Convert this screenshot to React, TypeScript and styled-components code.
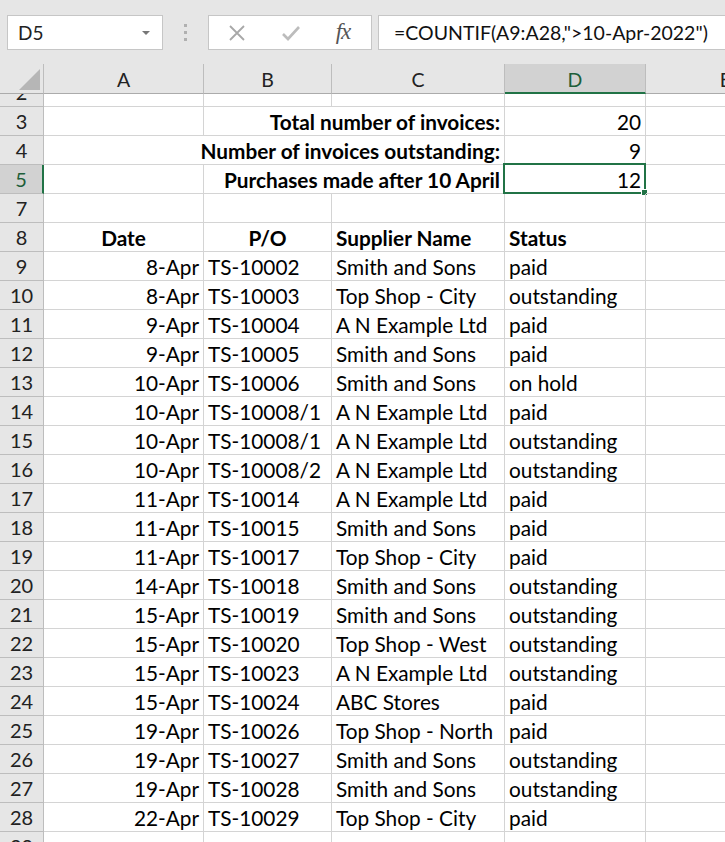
import React from "react";
import styled, { createGlobalStyle, css } from "styled-components";

const GREEN = "#217346";
const GRID = "#d4d4d4";
const HEAD_BG = "#e6e6e6";
const HEAD_SEL = "#d2d2d2";
const HEAD_LINE = "#bdbdbd";

const Global = createGlobalStyle`
  html, body { margin: 0; padding: 0; background: #e6e6e6; overflow: hidden; }
  body { width: 725px; height: 842px; }
  #root { width: 725px; height: 842px; overflow: hidden; }
`;

const Page = styled.div`
  width: 725px;
  height: 842px;
  overflow: hidden;
  display: flex;
  flex-direction: column;
  font-family: Lato, "Liberation Sans", sans-serif;
`;

const Toolbar = styled.div`
  height: 64px;
  box-sizing: border-box;
  padding: 15px 0 0 7px;
  display: flex;
  align-items: flex-start;
  background: #e6e6e6;
  flex-shrink: 0;
`;

const Box = styled.div<{ $w: number }>`
  width: ${(p) => p.$w}px;
  height: 35px;
  box-sizing: border-box;
  background: #fff;
  border: 1px solid #c6c6c6;
  display: flex;
  align-items: center;
  flex-shrink: 0;
`;

const NameText = styled.span`
  flex: 1;
  padding-left: 10px;
  font-size: 19px;
  color: #222;
`;

const Caret = styled.span`
  width: 0;
  height: 0;
  border-left: 4px solid transparent;
  border-right: 4px solid transparent;
  border-top: 4px solid #777;
  margin-right: 12px;
`;

const Dots = styled.div`
  width: 45px;
  height: 35px;
  display: flex;
  flex-direction: column;
  align-items: center;
  justify-content: center;
  gap: 4px;
  flex-shrink: 0;
  span {
    width: 3px;
    height: 3px;
    background: #b0b0b0;
  }
`;

const IconSlot = styled.div<{ $w: number }>`
  width: ${(p) => p.$w}px;
  height: 100%;
  display: flex;
  align-items: center;
  justify-content: center;
`;

const Fx = styled.span`
  font-family: "Liberation Serif", serif;
  font-style: italic;
  font-size: 23px;
  color: #555;
  letter-spacing: -1px;
  margin-top: -2px;
`;

const FormulaText = styled.span`
  padding-left: 15px;
  font-size: 19.5px;
  color: #111;
  white-space: nowrap;
`;

const Spacer = styled.div<{ $w: number }>`
  width: ${(p) => p.$w}px;
  flex-shrink: 0;
`;

const Sheet = styled.div`
  background: #fff;
  flex: 1;
  overflow: hidden;
`;

const COLS = "44px 160px 128px 173px 141px 160px";

const Row = styled.div<{ $h: number }>`
  display: grid;
  grid-template-columns: ${COLS};
  height: ${(p) => p.$h}px;
  width: 806px;
`;

const ClipRow = styled.div`
  height: 13px;
  overflow: hidden;
`;

const Inner = styled(Row)`
  margin-top: -16px;
`;

const Corner = styled.div`
  background: ${HEAD_BG};
  border-right: 1px solid ${HEAD_LINE};
  border-bottom: 1px solid #ababab;
  box-sizing: border-box;
  display: flex;
  align-items: flex-end;
  justify-content: flex-end;
  padding: 0 3px 3px 0;
`;

const Triangle = styled.div`
  width: 0;
  height: 0;
  border-left: 21px solid transparent;
  border-bottom: 21px solid #b6b6b6;
`;

const ColHead = styled.div<{ $sel?: boolean }>`
  box-sizing: border-box;
  background: ${(p) => (p.$sel ? HEAD_SEL : HEAD_BG)};
  border-right: 1px solid ${HEAD_LINE};
  border-bottom: ${(p) => (p.$sel ? `2px solid ${GREEN}` : "1px solid #ababab")};
  color: ${(p) => (p.$sel ? "#1e5f3a" : "#222")};
  font-size: 19.5px;
  display: flex;
  align-items: center;
  justify-content: center;
  padding-top: ${(p) => (p.$sel ? 2 : 1)}px;
`;

const RowHead = styled.div<{ $sel?: boolean }>`
  box-sizing: border-box;
  background: ${(p) => (p.$sel ? HEAD_SEL : HEAD_BG)};
  border-right: ${(p) => (p.$sel ? `2px solid ${GREEN}` : `1px solid ${HEAD_LINE}`)};
  border-bottom: 1px solid ${HEAD_LINE};
  color: ${(p) => (p.$sel ? "#1e5f3a" : "#222")};
  font-size: 20px;
  display: flex;
  align-items: center;
  justify-content: center;
  height: 100%;
`;

const Cell = styled.div<{ $align?: "left" | "right" | "center"; $bold?: boolean; $span?: number }>`
  position: relative;
  box-sizing: border-box;
  border-bottom: 1px solid ${GRID};
  border-right: 1px solid ${GRID};
  font-size: 20.8px;
  color: #000;
  white-space: nowrap;
  display: flex;
  align-items: center;
  padding: 0 4px 0 4px;
  justify-content: ${(p) =>
    p.$align === "right" ? "flex-end" : p.$align === "center" ? "center" : "flex-start"};
  ${(p) => p.$bold && css`font-weight: 700;`}
  ${(p) => p.$span && css`grid-column: span ${p.$span};`}
`;

const CursorBox = styled.div`
  position: absolute;
  left: -2px;
  top: -2px;
  width: 143px;
  height: 31px;
  box-sizing: border-box;
  border: 2px solid ${GREEN};
  pointer-events: none;
`;

const FillHandle = styled.div`
  position: absolute;
  right: -4px;
  bottom: -4px;
  width: 7px;
  height: 7px;
  box-sizing: border-box;
  background: ${GREEN};
  border: 1px solid #fff;
`;

type Data = [string, string, string, string];

const data: Data[] = [
  ["8-Apr", "TS-10002", "Smith and Sons", "paid"],
  ["8-Apr", "TS-10003", "Top Shop - City", "outstanding"],
  ["9-Apr", "TS-10004", "A N Example Ltd", "paid"],
  ["9-Apr", "TS-10005", "Smith and Sons", "paid"],
  ["10-Apr", "TS-10006", "Smith and Sons", "on hold"],
  ["10-Apr", "TS-10008/1", "A N Example Ltd", "paid"],
  ["10-Apr", "TS-10008/1", "A N Example Ltd", "outstanding"],
  ["10-Apr", "TS-10008/2", "A N Example Ltd", "outstanding"],
  ["11-Apr", "TS-10014", "A N Example Ltd", "paid"],
  ["11-Apr", "TS-10015", "Smith and Sons", "paid"],
  ["11-Apr", "TS-10017", "Top Shop - City", "paid"],
  ["14-Apr", "TS-10018", "Smith and Sons", "outstanding"],
  ["15-Apr", "TS-10019", "Smith and Sons", "outstanding"],
  ["15-Apr", "TS-10020", "Top Shop - West", "outstanding"],
  ["15-Apr", "TS-10023", "A N Example Ltd", "outstanding"],
  ["15-Apr", "TS-10024", "ABC Stores", "paid"],
  ["19-Apr", "TS-10026", "Top Shop - North", "paid"],
  ["19-Apr", "TS-10027", "Smith and Sons", "outstanding"],
  ["19-Apr", "TS-10028", "Smith and Sons", "outstanding"],
  ["22-Apr", "TS-10029", "Top Shop - City", "paid"],
];

const XIcon = () => (
  <svg width="18" height="18" viewBox="0 0 18 18">
    <path d="M2 2 L16 16 M16 2 L2 16" stroke="#a8a8a8" strokeWidth="1.8" fill="none" />
  </svg>
);

const CheckIcon = () => (
  <svg width="20" height="18" viewBox="0 0 20 18">
    <path d="M2 10 L7 15 L18 3" stroke="#bcbcbc" strokeWidth="2.6" fill="none" />
  </svg>
);

const EmptyCells = ({ n }: { n: number }) => (
  <>
    {Array.from({ length: n }, (_, i) => (
      <Cell key={i} />
    ))}
  </>
);

export default function App() {
  return (
    <>
      <Global />
      <Page>
        <Toolbar>
          <Box $w={156}>
            <NameText>D5</NameText>
            <Caret />
          </Box>
          <Dots>
            <span />
            <span />
            <span />
          </Dots>
          <Box $w={164}>
            <Spacer $w={10} />
            <IconSlot $w={36}>
              <XIcon />
            </IconSlot>
            <Spacer $w={18} />
            <IconSlot $w={36}>
              <CheckIcon />
            </IconSlot>
            <Spacer $w={16} />
            <IconSlot $w={36}>
              <Fx>fx</Fx>
            </IconSlot>
          </Box>
          <Spacer $w={6} />
          <Box $w={400}>
            <FormulaText>=COUNTIF(A9:A28,"&gt;10-Apr-2022")</FormulaText>
          </Box>
        </Toolbar>
        <Sheet>
          <Row $h={30}>
            <Corner>
              <Triangle />
            </Corner>
            <ColHead>A</ColHead>
            <ColHead>B</ColHead>
            <ColHead>C</ColHead>
            <ColHead $sel>D</ColHead>
            <ColHead>E</ColHead>
          </Row>
          <ClipRow>
            <Inner $h={29}>
              <RowHead>2</RowHead>
              <EmptyCells n={5} />
            </Inner>
          </ClipRow>
          <Row $h={29}>
            <RowHead>3</RowHead>
            <Cell />
            <Cell $span={2} $align="right" $bold>
              Total number of invoices:
            </Cell>
            <Cell $align="right">20</Cell>
            <Cell />
          </Row>
          <Row $h={29}>
            <RowHead>4</RowHead>
            <Cell $span={3} $align="right" $bold>
              Number of invoices outstanding:
            </Cell>
            <Cell $align="right">9</Cell>
            <Cell />
          </Row>
          <Row $h={29}>
            <RowHead $sel>5</RowHead>
            <Cell />
            <Cell $span={2} $align="right" $bold>
              Purchases made after 10 April
            </Cell>
            <Cell $align="right">
              12
              <CursorBox>
                <FillHandle />
              </CursorBox>
            </Cell>
            <Cell />
          </Row>
          <Row $h={29}>
            <RowHead>7</RowHead>
            <EmptyCells n={5} />
          </Row>
          <Row $h={29}>
            <RowHead>8</RowHead>
            <Cell $align="center" $bold>
              Date
            </Cell>
            <Cell $align="center" $bold>
              P/O
            </Cell>
            <Cell $bold>Supplier Name</Cell>
            <Cell $bold>Status</Cell>
            <Cell />
          </Row>
          {data.map((d, i) => (
            <Row $h={29} key={i}>
              <RowHead>{i + 9}</RowHead>
              <Cell $align="right">{d[0]}</Cell>
              <Cell>{d[1]}</Cell>
              <Cell>{d[2]}</Cell>
              <Cell>{d[3]}</Cell>
              <Cell />
            </Row>
          ))}
          <Row $h={29}>
            <RowHead>29</RowHead>
            <EmptyCells n={5} />
          </Row>
        </Sheet>
      </Page>
    </>
  );
}
